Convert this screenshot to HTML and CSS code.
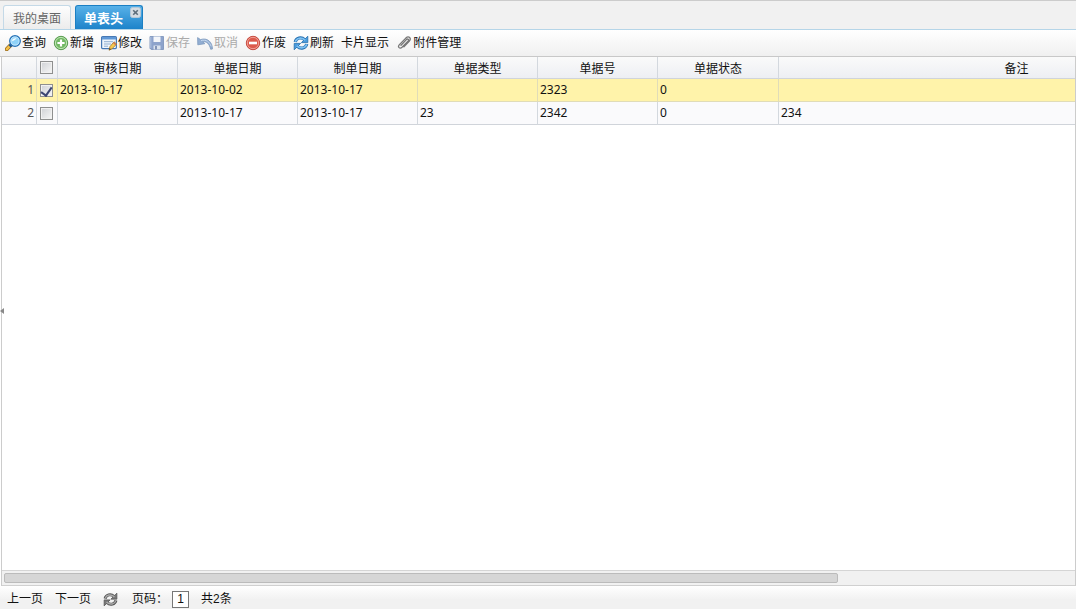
FILE: index.html
```html
<!DOCTYPE html>
<html lang="zh-CN">
<head>
<meta charset="utf-8">
<title>单表头</title>
<link rel="stylesheet" href="styles.css">
</head>
<body>
<div class="app">
  <nav class="tabs">
    <button class="tab" type="button">我的桌面</button>
    <div class="tab-wrap">
      <button class="tab tab-active" type="button">单表头</button>
      <button class="tab-close" type="button" aria-label="关闭">
        <svg viewBox="0 0 11 11" width="11" height="11"><rect x=".5" y=".5" width="10" height="10" rx="2" fill="#d5dce2" stroke="#b4c8d8"/><path d="M3.2 3.2l4.6 4.6M7.8 3.2L3.2 7.8" stroke="#5e6e7b" stroke-width="1.6"/></svg>
      </button>
    </div>
  </nav>
  <div class="toolbar">
    <button class="tool" type="button">
      <svg viewBox="0 0 16 16" width="16" height="16"><path d="M1.8 14.2l3.6-3.8" stroke="#9a6a1c" stroke-width="4" stroke-linecap="round"/><path d="M1.9 14.1l3.2-3.4" stroke="#f4c048" stroke-width="2.6" stroke-linecap="round"/><path d="M4.6 11.4l1.8-1.8" stroke="#1b5591" stroke-width="3"/><circle cx="10" cy="6" r="5.2" fill="#8fd2f8" stroke="#2874b8" stroke-width="1.5"/><circle cx="10" cy="6" r="4.1" fill="none" stroke="#d4f0ff" stroke-width=".8"/><path d="M7 6.2C7 3.8 9 2.8 11.6 3.3 10.5 4.6 9 5.8 7 6.2z" fill="#f4fcff"/></svg>
      <span>查询</span>
    </button>
    <button class="tool" type="button">
      <svg viewBox="0 0 16 16" width="16" height="16"><circle cx="8" cy="8" r="6.7" fill="#71b863" stroke="#5a9d51"/><circle cx="8" cy="8" r="5.6" fill="none" stroke="#c1e5b7" stroke-width="1"/><path d="M8 4.4v7.2M4.4 8h7.2" stroke="#fff" stroke-width="2.2"/></svg>
      <span>新增</span>
    </button>
    <button class="tool" type="button">
      <svg viewBox="0 0 16 16" width="16" height="16"><rect x=".6" y="1.6" width="14.8" height="12" rx="1" fill="#eef5fc" stroke="#4779b5" stroke-width="1.2"/><path d="M1 2h14v2.5H1z" fill="#6098d7"/><path d="M3 6.7h9M3 9h7M3 11.2h4" stroke="#91afd1"/><path d="M8 15.2l.9-3.5L13 6.8l2.6 2.3-4.6 4.7z" fill="#f5c950" stroke="#a37729" stroke-width=".8"/><path d="M8 15.2l.7-2.2 1.3 1.3z" fill="#554329"/><path d="M12.4 7.5l2.4 2.2" stroke="#d27258" stroke-width="1.2"/></svg>
      <span>修改</span>
    </button>
    <button class="tool" type="button" disabled>
      <svg viewBox="0 0 16 16" width="16" height="16"><path d="M1 1.5h13.5v13H2.2L1 13.3z" fill="#5577b5" stroke="#4b6ca5"/><path d="M4.5 1.5h7v5.5h-7z" fill="#f1f5fb"/><path d="M4.5 10.5h7v4h-7z" fill="#cedaea"/><path d="M6 11h2v3.5H6z" fill="#466197"/><path d="M1.8 2v11" stroke="#8ca8d6"/></svg>
      <span>保存</span>
    </button>
    <button class="tool" type="button" disabled>
      <svg viewBox="0 0 16 16" width="16" height="16"><path d="M.6 2.6l.2 7.2 7-1.1-2.1-1.9c3.7-.6 6.6 1.8 8 7.5l1.8-.4C15.200 7 10.400 2.300 3.500 4.600z" fill="#5d87bf" stroke="#3e699f" stroke-width=".8"/><path d="M4 5.600c5-1.500 8.600 1.400 10.200 5.800" stroke="#a9c5e8" fill="none"/></svg>
      <span>取消</span>
    </button>
    <button class="tool" type="button">
      <svg viewBox="0 0 16 16" width="16" height="16"><circle cx="8" cy="8" r="6.7" fill="#dc5a4c" stroke="#c5493e"/><circle cx="8" cy="8" r="5.7" fill="none" stroke="#f0a096"/><path d="M4 8h8" stroke="#fff" stroke-width="2.6"/></svg>
      <span>作废</span>
    </button>
    <button class="tool" type="button">
      <svg viewBox="0 0 16 16" width="16" height="16"><g fill="none" stroke="#226eaf" stroke-width="3.2"><path d="M2.200 7C3.200 2.800 8.300 1.500 11.600 4.600"/><path d="M13.800 9C12.800 13.200 7.700 14.500 4.400 11.400"/></g><path d="M14.800 1.200v6.400H8.400zM1.200 14.800V8.400h6.400z" fill="#4a9bdc" stroke="#226eaf" stroke-width=".8"/><g fill="none" stroke="#7cc0f2" stroke-width="1.700"><path d="M2.300 6.800C3.400 3 8.400 1.700 12.200 5.200"/><path d="M13.700 9.200C12.600 13 7.600 14.300 3.800 10.800"/></g></svg>
      <span>刷新</span>
    </button>
    <button class="tool" type="button"><span>卡片显示</span></button>
    <button class="tool" type="button">
      <svg viewBox="0 0 16 16" width="16" height="16"><path d="M5 10.200l5.400-5.600c1.400-1.300 2.800.1 1.600 1.500L6.300 12c-2.600 2.500-5-.1-2.900-2.400l6.400-6.500c3-2.800 6 .3 3.400 3.200l-5.300 5.500" fill="none" stroke="#777" stroke-width="1.300" stroke-linecap="round"/></svg>
      <span>附件管理</span>
    </button>
  </div>
  <main class="grid">
    <div class="grid-body">
      <table class="table">
        <colgroup><col class="c-num"><col class="c-check"><col class="c-data"><col class="c-data"><col class="c-data"><col class="c-data"><col class="c-data"><col class="c-state"><col class="c-note"></colgroup>
        <thead>
          <tr><th></th><th class="check"><input type="checkbox" aria-label="全选"></th><th>审核日期</th><th>单据日期</th><th>制单日期</th><th>单据类型</th><th>单据号</th><th>单据状态</th><th>备注</th></tr>
        </thead>
        <tbody>
          <tr class="selected"><td class="num">1</td><td class="check"><input type="checkbox" aria-label="选择第1行" checked></td><td>2013-10-17</td><td>2013-10-02</td><td>2013-10-17</td><td></td><td>2323</td><td>0</td><td></td></tr>
          <tr><td class="num">2</td><td class="check"><input type="checkbox" aria-label="选择第2行"></td><td></td><td>2013-10-17</td><td>2013-10-17</td><td>23</td><td>2342</td><td>0</td><td>234</td></tr>
        </tbody>
      </table>
    </div>
    <div class="scroll"><div class="thumb"></div></div>
    <button class="collapse" type="button" aria-label="展开侧栏"><svg viewBox="0 0 4 6" width="4" height="6"><path d="M4 0v6L0 3z" fill="#888"/></svg></button>
  </main>
  <footer class="pager">
    <button class="page-btn" type="button">上一页</button>
    <button class="page-btn" type="button">下一页</button>
    <button class="reload" type="button" aria-label="刷新">
      <svg viewBox="0 0 16 16" width="15" height="15"><g fill="none" stroke="#555" stroke-width="3.200"><path d="M2.200 7C3.200 2.800 8.300 1.500 11.600 4.600"/><path d="M13.800 9C12.800 13.200 7.700 14.500 4.400 11.400"/></g><path d="M14.800 1.200v6.400H8.400zM1.200 14.800V8.400h6.400z" fill="#777" stroke="#555" stroke-width=".8"/><g fill="none" stroke="#aaa" stroke-width="1.500"><path d="M2.300 6.800C3.400 3 8.400 1.700 12.200 5.200"/><path d="M13.700 9.200C12.600 13 7.600 14.300 3.800 10.800"/></g></svg>
    </button>
    <label class="page-label" for="page">页码：</label>
    <input class="page-input" id="page" type="text" value="1">
    <span>共2条</span>
  </footer>
</div>
</body>
</html>
```
FILE: styles.css
```css
* { box-sizing: border-box; }
html, body { height: 100%; }
body {
  margin: 0;
  font: 12px/16px "Noto Sans", "Noto Sans CJK SC", sans-serif;
  color: #111;
  background: #fff;
}
button, input { font: inherit; color: inherit; margin: 0; }
button { padding: 0; border: 0; background: none; white-space: nowrap; }
svg { display: block; flex: none; }

.app { display: flex; flex-direction: column; height: 100vh; overflow: hidden; }

.tabs {
  display: flex;
  align-items: flex-end;
  gap: 4px;
  height: 30px;
  padding: 0 3px;
  flex: none;
  border-top: 1px solid #ccc;
  border-bottom: 1px solid #b5d5e8;
  background: #f1f1f1;
}
.tab {
  display: block;
  height: 24px;
  padding: 2px 9px 0;
  border: 1px solid #c4d9e7;
  border-bottom: 0;
  border-radius: 3px 3px 0 0;
  background: linear-gradient(#fdfdfd, #ececec);
  color: #666;
}
.tab-wrap { position: relative; }
.tab-active {
  padding: 0 19px 0 8px;
  border-color: #1b7fc3;
  background: linear-gradient(#58b1e8, #1d83ca);
  color: #fff;
  font-size: 13px;
  font-weight: bold;
}
.tab-close { position: absolute; top: 2px; right: 2px; }

.toolbar {
  display: flex;
  align-items: center;
  gap: 7px;
  height: 27px;
  padding: 0 5px;
  flex: none;
  border-bottom: 1px solid #c8c8c8;
  background: linear-gradient(#fff, #f0f0f0);
}
.tool { display: flex; align-items: center; gap: 1px; }
.tool:disabled { color: #aaa; }
.tool:disabled svg { opacity: .65; }

.grid {
  position: relative;
  display: flex;
  flex-direction: column;
  flex: 1;
  min-height: 0;
  margin-left: 1px;
  border-left: 1px solid #ccc;
  border-right: 1px solid #ccc;
}
.grid-body { flex: 1; min-height: 0; overflow: hidden; }
.table { width: 1253px; table-layout: fixed; border-collapse: separate; border-spacing: 0; }
.c-num { width: 35px; }
.c-check { width: 21px; }
.c-data { width: 120px; }
.c-state { width: 121px; }
th, td {
  height: 23px;
  padding: 0 2px;
  border-right: 1px solid #d3d8de;
  border-bottom: 1px solid #d0d4da;
  font-weight: normal;
  text-align: left;
  vertical-align: middle;
}
th {
  height: 22px;
  padding-top: 2px;
  text-align: center;
  background: linear-gradient(#fafafa, #edeff3);
}
tbody tr { background: #fafafc; }
tbody .selected { background: #fff3aa; }
.selected td { border-color: #e0dcb8; }
.num { color: #555; text-align: right; }
.check { padding: 0 0 0 3px; }
.check input {
  display: block;
  appearance: none;
  width: 13px;
  height: 13px;
  border: 1px solid #8e8f8f;
  background: linear-gradient(135deg, #cfd1d5, #f7f7f7);
  box-shadow: inset 0 0 0 1px #f1f1f1;
}
.check input:checked {
  display: grid;
  place-items: start center;
}
.check input:checked::before {
  content: "";
  width: 5px;
  height: 9px;
  border: solid #3c4672;
  border-width: 0 2px 2px 0;
  transform: rotate(35deg);
}

.scroll {
  flex: none;
  height: 16px;
  padding: 2px;
  border-top: 1px solid #d5d5d5;
  border-bottom: 1px solid #d0d0d0;
  background: #f1f1f1;
}
.thumb {
  width: 78%;
  height: 10px;
  border: 1px solid #bbb;
  border-radius: 2px;
  background: #d6d6d6;
}
.collapse { position: absolute; left: -2px; top: 251px; }

.pager {
  display: flex;
  align-items: center;
  gap: 12px;
  height: 23px;
  padding: 3px 7px 0;
  flex: none;
  font-family: "Liberation Sans", "Noto Sans CJK SC", sans-serif;
  background: linear-gradient(#fff, #f1f1f1 60%);
}
.page-label { width: 28px; margin-left: 2px; }
.page-input {
  width: 17px;
  height: 17px;
  padding: 0;
  border: 1px solid #777;
  background: #fff;
  text-align: center;
}
.page-label { white-space: nowrap; }
```
